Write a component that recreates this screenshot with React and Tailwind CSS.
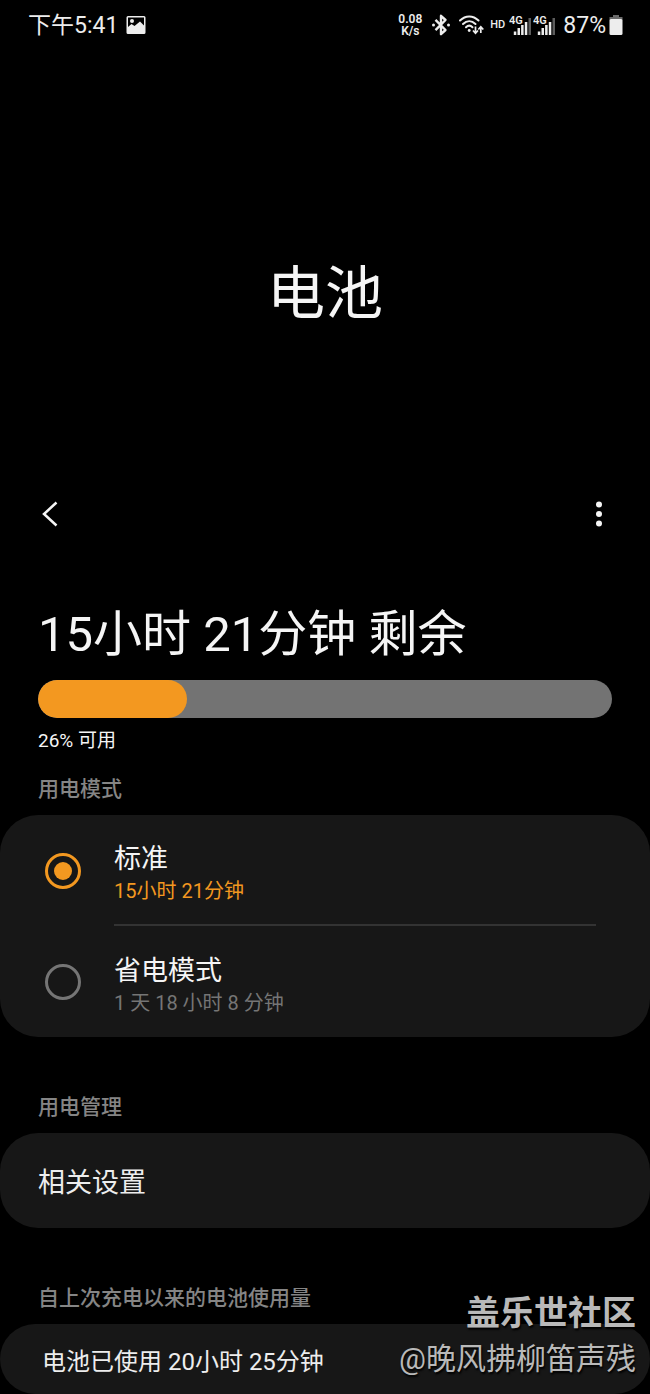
import React, { useState } from 'react';

const BATTERY_LEVEL = 26;

const MODES = [
	{
		id: 'standard',
		name: '标准',
		remain: '15小时 21分钟',
	},
	{
		id: 'saving',
		name: '省电模式',
		remain: '1 天 18 小时 8 分钟',
	},
];

const ImageIcon = () => (
	<svg width="20" height="20" viewBox="0 0 20 20" fill="none">
		<path
			fill="#ededed"
			fillRule="evenodd"
			d="M2 1h16a1.5 1.5 0 0 1 1.5 1.5v15A1.5 1.5 0 0 1 18 19H2a1.5 1.5 0 0 1-1.5-1.5v-15A1.5 1.5 0 0 1 2 1Zm0 1.500v9.500l3.500-3 3 2 5.500-4.500 4 4V2.500Z"
		/>
		<circle cx="6" cy="6" r="2" fill="#ededed" />
	</svg>
);

const BluetoothIcon = () => (
	<svg width="18" height="22" viewBox="0 0 18 22" fill="none">
		<path
			d="M3.5 5.8 13.5 16 9 20.2V1.8L13.5 6 3.5 16.2"
			stroke="#ededed"
			strokeWidth="2.4"
			strokeLinejoin="round"
		/>
		<circle cx="1.5" cy="11" r="1.5" fill="#ededed" />
		<circle cx="16.5" cy="11" r="1.5" fill="#ededed" />
	</svg>
);

const WifiIcon = () => (
	<svg width="25" height="20" viewBox="0 0 25 20" fill="none">
		<g stroke="#ededed" strokeWidth="2" strokeLinecap="round">
			<path d="M1 5.5C6.5 0 14 0 19.5 5.5" />
			<path d="M4 9c3.8-3.8 8.700-3.800 12.500 0" />
			<path d="M7 12.2c2-2 4.500-2 6.500 0" />
		</g>
		<circle cx="10.2" cy="15.5" r="1.4" fill="#ededed" />
		<g stroke="#ededed" strokeWidth="1.7">
			<path d="M16.5 11.500v6.500M14 15.500l2.500 2.800 2.500-2.800" />
			<path d="M21.8 18v-6M19.300 14.500l2.500-2.800 2.500 2.800" />
		</g>
	</svg>
);

const SignalIcon = () => (
	<svg width="24" height="20" viewBox="0 0 24 20">
		<text x="0" y="9" fontSize="11" fontWeight="600" fill="#ededed">
			4G
		</text>
		<g fill="#ededed">
			<rect x="4.8" y="16.500" width="2.500" height="3.500" />
			<rect x="8.500" y="13" width="2.500" height="7" />
			<rect x="12.100" y="10" width="2.500" height="10" />
			<rect x="15.800" y="7" width="2.500" height="13" />
		</g>
		<rect x="19.500" y="3" width="2.500" height="17" fill="#5c5c5c" />
	</svg>
);

const BatteryIcon = () => (
	<svg width="14" height="20" viewBox="0 0 14 20">
		<path d="M4 0h6v2h3.5v3H.5V2H4Z" fill="#6b6b6b" />
		<rect x="0.5" y="4" width="13" height="16" rx="1.5" fill="#ededed" />
	</svg>
);

const StatusBar = () => (
	<div className="flex h-[50px] items-center justify-between pl-7 pr-[27px] text-[23px] text-[#ededed]">
		<div className="flex items-center gap-2">
			<span className="pt-[3px]">下午5:41</span>
			<ImageIcon />
		</div>
		<div className="flex items-center">
			<div className="mr-2.5 text-center text-[12px] leading-[12px] font-semibold">
				<div>0.08</div>
				<div>K/s</div>
			</div>
			<BluetoothIcon />
			<div className="ml-[9px] mr-1.5">
				<WifiIcon />
			</div>
			<span className="mr-1 text-[11px] font-medium">HD</span>
			<SignalIcon />
			<SignalIcon />
			<span className="ml-1.5 mr-[3px] pt-[3px]">87%</span>
			<BatteryIcon />
		</div>
	</div>
);

const SectionTitle = ({ children }) => (
	<h2 className="px-[38px] text-[21px] leading-[30px] font-medium text-[#858585]">
		{children}
	</h2>
);

const App = () => {
	const [mode, setMode] = useState('standard');

	return (
		<div className="relative min-h-screen overflow-hidden bg-black font-['Roboto','Noto_Sans_CJK_SC',sans-serif] text-[#f5f5f5]">
			<StatusBar />

			<h1 className="pt-[204px] text-center text-[58px] leading-[80px]">
				电池
			</h1>

			{/* toolbar */}
			<div className="mt-[156px] flex items-center justify-between px-[38px]">
				<button type="button" aria-label="返回" className="py-2">
					<svg width="24" height="32" viewBox="0 0 24 32" fill="none">
						<path
							d="M18.5 4.500 6 16l12.500 11.500"
							stroke="#f5f5f5"
							strokeWidth="2.5"
						/>
					</svg>
				</button>
				<button type="button" aria-label="更多选项" className="py-2">
					<svg width="26" height="32" viewBox="0 0 26 32" fill="#f5f5f5">
						<circle cx="13" cy="6.5" r="3" />
						<circle cx="13" cy="16" r="3" />
						<circle cx="13" cy="25.5" r="3" />
					</svg>
				</button>
			</div>

			{/* remaining time */}
			<div className="mt-[62px] px-[38px]">
				<p className="text-[49px] leading-[70px]">15小时 21分钟 剩余</p>
				<div
					role="progressbar"
					aria-label="电池电量"
					aria-valuenow={BATTERY_LEVEL}
					aria-valuemin={0}
					aria-valuemax={100}
					className="mt-2.5 h-[38px] overflow-hidden rounded-full bg-[#737373]"
				>
					<div
						className="h-full rounded-full bg-[#f39820]"
						style={{ width: `${BATTERY_LEVEL}%` }}
					></div>
				</div>
				<p className="mt-2 text-[19px] leading-[30px]">
					{BATTERY_LEVEL}% 可用
				</p>
			</div>

			{/* power mode */}
			<div className="mt-[18px]">
				<SectionTitle>用电模式</SectionTitle>
				<div className="mt-[11px] rounded-[38px] bg-[#171717] pl-[45px] pr-[54px]">
					{MODES.map((item, index) => (
						<label
							key={item.id}
							className="flex cursor-pointer items-center gap-[33px]"
						>
							<input
								type="radio"
								name="mode"
								value={item.id}
								checked={mode === item.id}
								onChange={() => setMode(item.id)}
								className="grid size-9 shrink-0 appearance-none place-content-center rounded-full border-[3px] border-[#757575] before:size-[18px] before:rounded-full before:content-[''] checked:border-[#f39820] checked:before:bg-[#f39820]"
							/>
							<span
								className={`flex h-[111px] flex-1 flex-col justify-center pt-2 ${
									index !== MODES.length - 1 &&
									'border-b-2 border-solid border-[#333333]'
								}`}
							>
								<span className="text-[27px] leading-[34px]">
									{item.name}
								</span>
								<span
									className={`text-[20px] leading-[30px] ${
										mode === item.id
											? 'text-[#f39820]'
											: 'text-[#757575]'
									}`}
								>
									{item.remain}
								</span>
							</span>
						</label>
					))}
				</div>
			</div>

			{/* power management */}
			<div className="mt-[55px]">
				<SectionTitle>用电管理</SectionTitle>
				<button
					type="button"
					className="mt-[11px] block h-[95px] w-full rounded-[38px] bg-[#171717] px-[38px] pt-1.5 text-left text-[27px] text-[#ededed]"
				>
					相关设置
				</button>
			</div>

			{/* usage since last charge */}
			<div className="mt-[55px]">
				<SectionTitle>自上次充电以来的电池使用量</SectionTitle>
				<div className="mt-[11px] rounded-[38px] bg-[#171717] px-[42px] pt-5 pb-3.5 text-[24px] leading-9 text-[#ededed]">
					电池已使用 20小时 25分钟
				</div>
			</div>

			<div className="absolute right-3.5 bottom-3 text-right text-[#b9b9b9] text-shadow-[1px_2px_2px_#000000]">
				<p className="text-[34px] leading-[46px] font-bold">盖乐世社区</p>
				<p className="text-[30px] leading-[46px]">@晚风拂柳笛声残</p>
			</div>
		</div>
	);
};

export default App;
